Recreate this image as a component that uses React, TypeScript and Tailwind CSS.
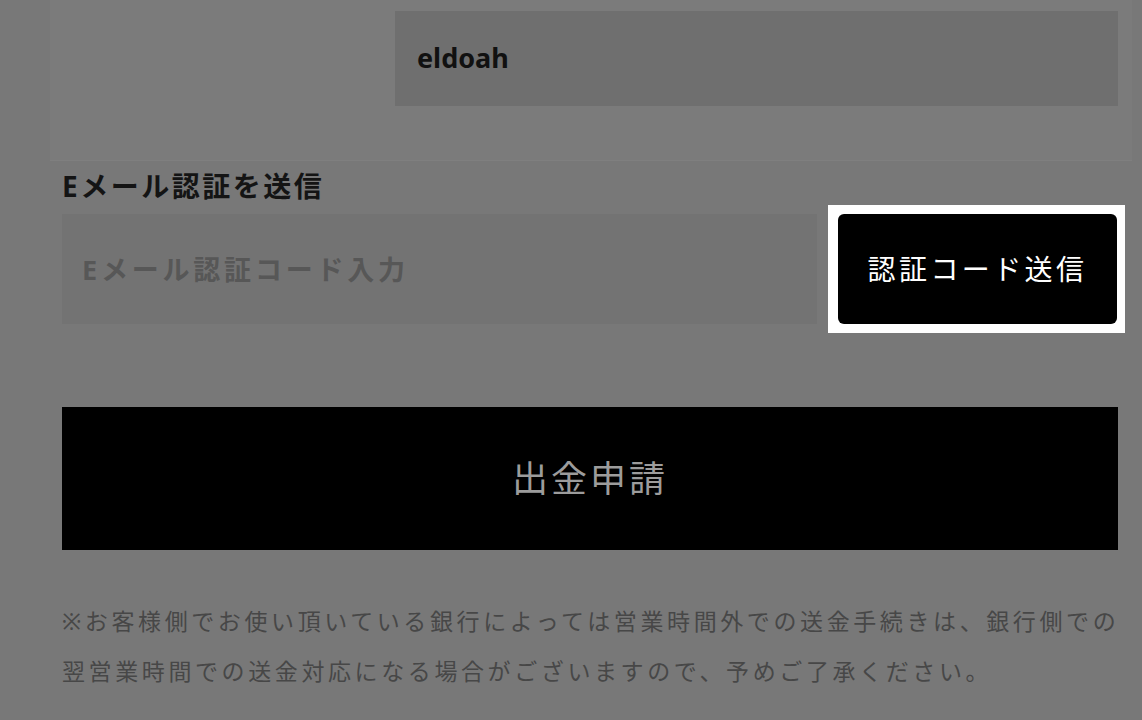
import React from "react";

export default function App() {
	return (
		<div
			className="w-[1142px] h-[720px] overflow-hidden bg-[#787878]"
			style={{ fontFamily: '"Noto Sans", "Noto Sans CJK JP", sans-serif' }}
		>
			{/* account name card */}
			<div className="ml-[50px] mr-[10px] h-[161px] bg-[#7b7b7b] pt-[11px] pr-[14px] flex justify-end border-b border-[#7f7f7f]">
				<div className="w-[723px] h-[95px] bg-[#6f6f6f] px-[22px] flex items-center">
					<span className="text-[27px] font-bold text-[#111]">eldoah</span>
				</div>
			</div>

			<div className="pl-[62px] pr-[24px]">
				<p className="mt-[8px] h-[34px] leading-[34px] text-[28px] font-bold tracking-[2.5px] text-[#141414]">
					Eメール認証を送信
				</p>

				<div className="mt-[2px] flex items-start">
					<input
						type="text"
						placeholder="Eメール認証コード入力"
						className="shrink-0 mt-[9px] w-[755px] h-[110px] bg-[#737373] pl-[20px] text-[27px] font-bold tracking-[3.8px] outline-none placeholder:text-[#575757]"
					/>
					<div className="shrink-0 ml-[11px] bg-white pt-[9px] pb-[9px] pl-[10px] pr-[8px]">
						<button className="w-[279px] h-[110px] bg-black rounded-[6px] text-white text-[28px] tracking-[3.4px]">
							認証コード送信
						</button>
					</div>
				</div>

				<button className="mt-[74px] w-full h-[143px] bg-black text-[36px] tracking-[3px] text-[#9c9c9c]">
					出金申請
				</button>

				<p className="mt-[46px] text-[23px] leading-[50px] tracking-[3.6px] text-[#474747] whitespace-nowrap">
					※お客様側でお使い頂いている銀行によっては営業時間外での送金手続きは、銀行側での
					<br />
					翌営業時間での送金対応になる場合がございますので、予めご了承ください。
				</p>
			</div>
		</div>
	);
}
